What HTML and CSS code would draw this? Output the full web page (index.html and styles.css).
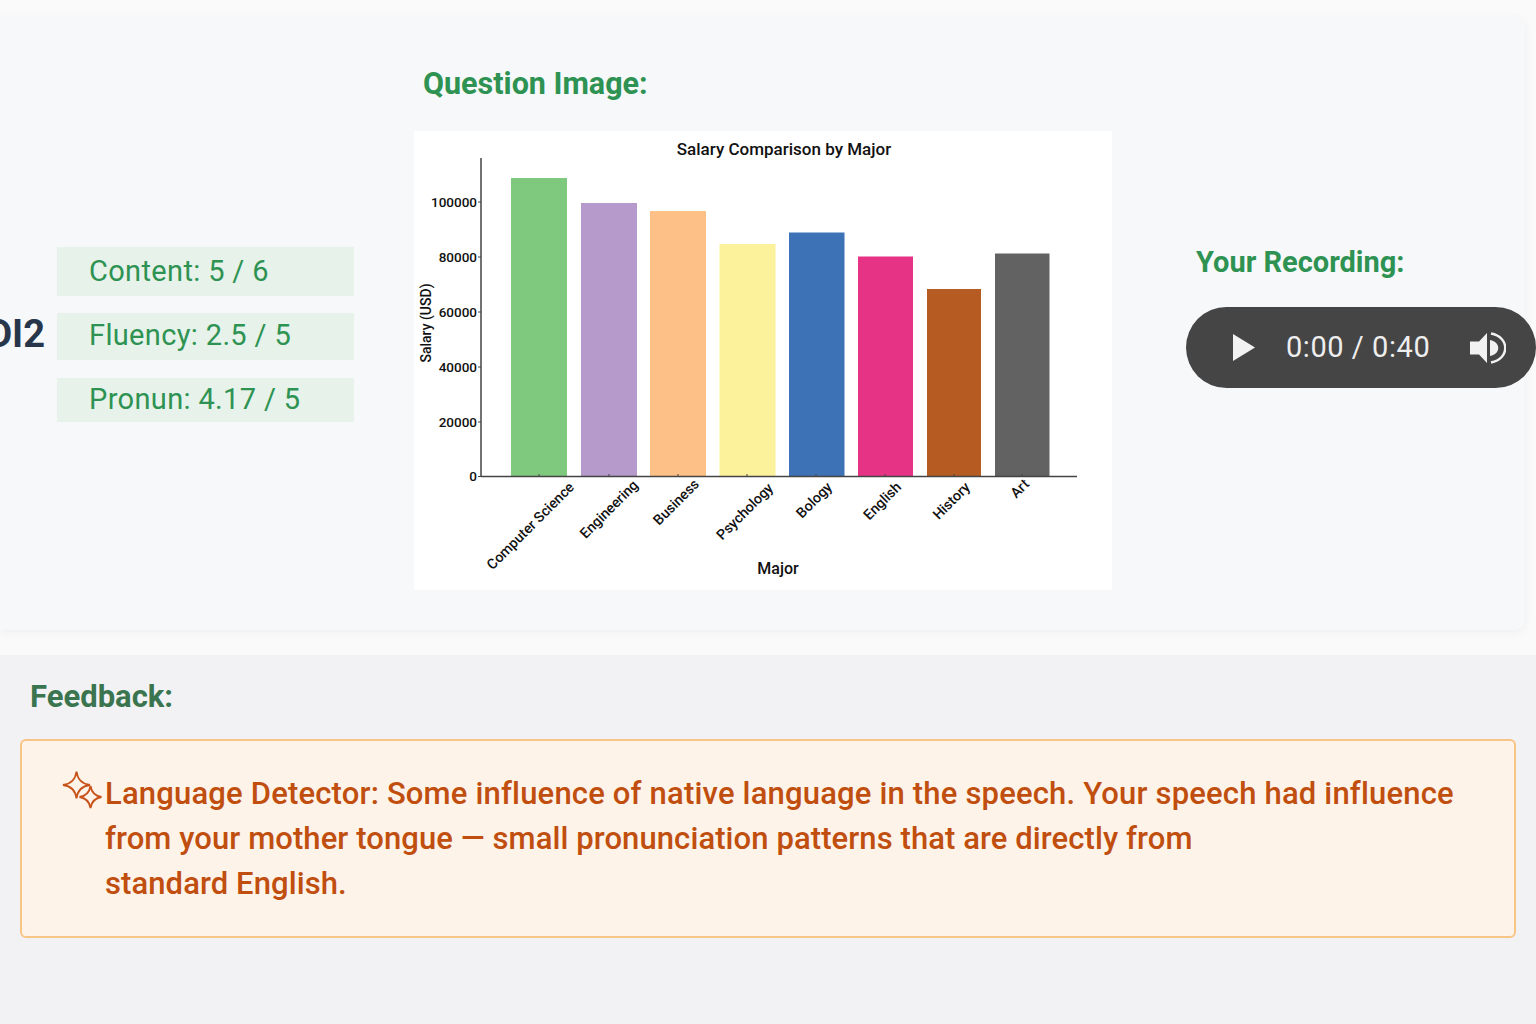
FILE: index.html
```html
<!DOCTYPE html>
<html lang="en">
<head>
  <meta charset="UTF-8" />
  <meta name="viewport" content="width=device-width, initial-scale=1.0" />
  <title>Speaking Result</title>
  <link rel="stylesheet" href="styles.css">
</head>
<body>
  <section class="result-card">
    <div class="score-total">DI2</div>
    <div class="score-list">
      <div class="score-pill pill-content">Content: 5 / 6</div>
      <div class="score-pill pill-fluency">Fluency: 2.5 / 5</div>
      <div class="score-pill pill-pronun">Pronun: 4.17 / 5</div>
    </div>
    <div class="question-col">
      <h3 class="col-title question-title">Question Image:</h3>
      <div class="chart">
        <svg viewBox="0 0 698 459" width="698" height="459">
          <text class="chart-title" x="370" y="24" text-anchor="middle">Salary Comparison by Major</text>
          <g>
            <rect x="97" y="47" width="56" height="298.5" fill="#7fc97f"/>
            <rect x="167" y="72" width="56" height="273.5" fill="#b59acb"/>
            <rect x="236" y="80" width="56" height="265.5" fill="#fdc086"/>
            <rect x="305.500" y="113" width="56" height="232.5" fill="#fdf29c"/>
            <rect x="375" y="101.500" width="55.500" height="244" fill="#3d72b6"/>
            <rect x="444" y="125.500" width="55" height="220" fill="#e63386"/>
            <rect x="513" y="158" width="54" height="187.500" fill="#b65c22"/>
            <rect x="581" y="122.500" width="54.500" height="223" fill="#626262"/>
          </g>
          <path class="axis" d="M67 27V346M67 345.500H663"/>
          <path class="tick" d="M64 71H67M64 126H67M64 181H67M64 236H67M64 291H67M64 345.500H67"/>
          <path class="tick" d="M125 343V346M195 343V346M264 343V346M333 343V346M402 343V346M471 343V346M540 343V346M608 343V346"/>
          <g class="tick-label" text-anchor="end">
            <text x="63" y="76">100000</text>
            <text x="63" y="131">80000</text>
            <text x="63" y="186">60000</text>
            <text x="63" y="241">40000</text>
            <text x="63" y="296">20000</text>
            <text x="63" y="350">0</text>
          </g>
          <g class="tick-label rotated" text-anchor="end">
            <text transform="translate(161 357) rotate(-45)">Computer Science</text>
            <text transform="translate(225 355) rotate(-45)">Engineering</text>
            <text transform="translate(286 354) rotate(-45)">Business</text>
            <text transform="translate(360 358) rotate(-45)">Psychology</text>
            <text transform="translate(419 357) rotate(-45)">Bology</text>
            <text transform="translate(488 357) rotate(-45)">English</text>
            <text transform="translate(557 357) rotate(-45)">History</text>
            <text transform="translate(616 354) rotate(-45)">Art</text>
          </g>
          <text class="axis-label" x="364" y="443" text-anchor="middle">Major</text>
          <text class="axis-label small" transform="translate(17 192) rotate(-90)" text-anchor="middle">Salary (USD)</text>
        </svg>
      </div>
    </div>
    <div class="recording-col">
      <h3 class="col-title">Your Recording:</h3>
      <div class="audio-player">
        <svg class="play-icon" viewBox="0 0 22 27" width="22" height="27"><path d="M0 0L22 13.500L0 27Z" fill="#f2f2f2"/></svg>
        <span class="audio-time">0:00 / 0:40</span>
        <svg class="volume-icon" viewBox="0 0 36 32" width="36" height="32">
          <path d="M0 9.500H9L17 1V31L9 22.500H0Z" fill="#f2f2f2"/>
          <path d="M20 8C31 10 31 22 20 24Z" fill="#f2f2f2"/>
          <path d="M21 1.500C40 5 40 27 21 30.500" fill="none" stroke="#f2f2f2" stroke-width="2.500"/>
        </svg>
      </div>
    </div>
  </section>

  <section class="feedback">
    <h3 class="feedback-title">Feedback:</h3>
    <div class="alert">
      <svg class="sparkle" viewBox="0 0 42 38" width="42" height="38">
        <path d="M14.500 0.500C15.500 8 20 13 28 14C20 15 15.500 20 14.500 27.500C13.500 20 9 15 1 14C9 13 13.500 8 14.500 0.500Z" fill="none" stroke="#c8531a" stroke-width="1.800"/>
        <path d="M28.500 15C29.500 21 33 25 39.500 26C33 27 29.500 31 28.500 37C27.500 31 24 27 17.500 26C24 25 27.500 21 28.500 15Z" fill="#fef3e8" stroke="#c8531a" stroke-width="1.800"/>
      </svg>
      <p class="alert-text">Language Detector: Some influence of native language in the speech. Your speech had influence<br><span class="alert-line">from your mother tongue — small pronunciation patterns that are directly from</span><br><span class="alert-line">standard English.</span></p>
    </div>
  </section>
</body>
</html>
```

FILE: styles.css
```css
* {
  margin: 0;
  padding: 0;
  box-sizing: border-box;
  font-family: 'Roboto', sans-serif;
}
html, body {
  height: 1024px;
  overflow: hidden;
}
body {
  background: #fafafa;
  padding-top: 17px;
}
.result-card {
  display: flex;
  width: 1525px;
  height: 613px;
  background: #f7f8fa;
  border-radius: 0 10px 10px 0;
  box-shadow: 0 2px 10px rgba(0,0,0,0.05);
}
.score-total {
  flex: none;
  width: 45px;
  margin-top: 295px;
  height: 44px;
  overflow: hidden;
  direction: rtl;
  font-size: 38px;
  font-weight: 700;
  line-height: 44px;
  color: #27364b;
}
.score-list {
  flex: none;
  display: flex;
  flex-direction: column;
  width: 297px;
  margin: 230px 0 0 12px;
}
.score-pill {
  display: flex;
  align-items: center;
  padding-left: 32px;
  background: #e7f2ea;
  color: #2e9352;
  font-size: 29px;
  letter-spacing: 0.350px;
}
.pill-content { height: 49px; margin-bottom: 17px; padding-bottom: 2px; }
.pill-fluency { height: 47px; margin-bottom: 18px; padding-bottom: 4px; }
.pill-pronun { height: 44px; padding-bottom: 2px; }
.question-col {
  flex: none;
  width: 698px;
  margin-left: 60px;
}
.col-title {
  font-size: 29px;
  font-weight: 700;
  color: #2e9352;
  line-height: 34px;
}
.question-title {
  margin: 50px 0 30px 9px;
  font-size: 30.500px;
}
.chart {
  width: 698px;
  height: 459px;
  background: #fff;
}
.chart svg {
  display: block;
}
.chart-title {
  font-size: 17px;
  font-weight: 500;
  fill: #111;
}
.axis {
  fill: none;
  stroke: #444;
  stroke-width: 1.500;
}
.tick {
  fill: none;
  stroke: #444;
  stroke-width: 1;
}
.tick-label text {
  font-size: 13.500px;
  font-weight: 500;
  fill: #111;
}
.tick-label.rotated text {
  font-size: 14.200px;
}
.axis-label {
  font-size: 16px;
  font-weight: 500;
  fill: #111;
}
.axis-label.small {
  font-size: 14px;
}
.recording-col {
  flex: none;
  width: 350px;
  margin: 228px 0 0 74px;
}
.recording-col .col-title {
  margin-left: 10px;
  margin-bottom: 28px;
}
.audio-player {
  display: flex;
  align-items: center;
  width: 350px;
  height: 81px;
  padding-left: 47px;
  background: #454545;
  border-radius: 41px;
}
.audio-time {
  margin-left: 31px;
  width: 184px;
  padding-bottom: 2px;
  font-size: 29px;
  letter-spacing: 0.550px;
  color: #eee;
}
.feedback {
  height: 369px;
  margin-top: 25px;
  padding: 23px 20px 0;
  background: #f2f2f4;
}
.feedback-title {
  margin-left: 10px;
  margin-bottom: 23px;
  font-size: 31px;
  font-weight: 700;
  line-height: 38px;
  color: #3a7550;
}
.alert {
  display: flex;
  align-items: flex-start;
  gap: 1px;
  width: 1496px;
  height: 199px;
  padding: 30px 40px 0;
  background: #fef3e8;
  border: 2px solid #f8c587;
  border-radius: 6px;
}
.sparkle {
  flex: none;
}
.alert-text {
  font-size: 31px;
  font-weight: 500;
  line-height: 45px;
  letter-spacing: 0.180px;
  color: #c04e0f;
}
.alert-line {
  letter-spacing: 0.090px;
}
```
